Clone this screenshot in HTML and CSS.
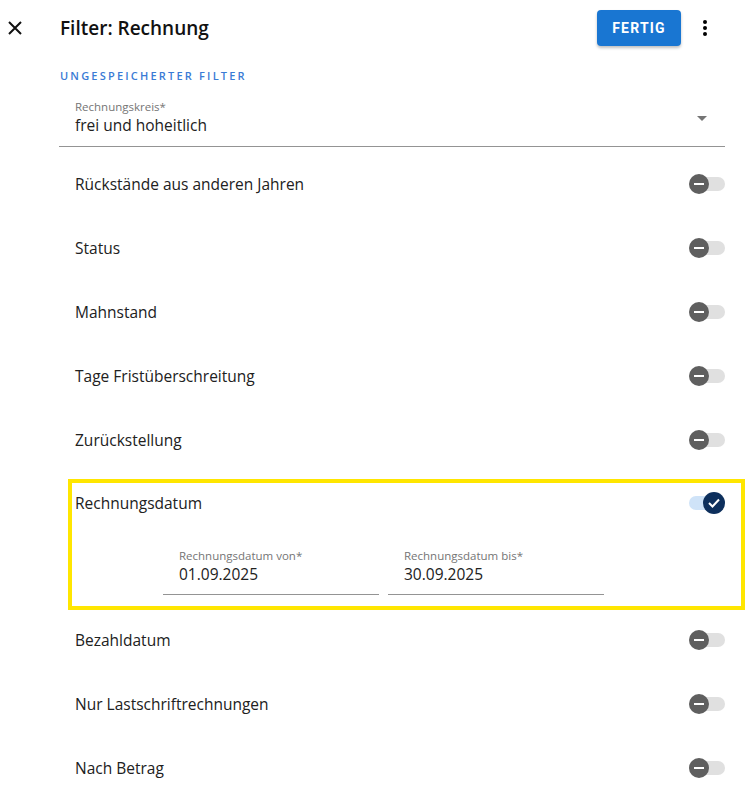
FILE: index.html
```html
<!DOCTYPE html>
<html>
    <head>
        <meta charset="utf-8">
        <title>Filter: Rechnung</title>
        <link rel="stylesheet" href="styles.css">
    </head>

    <body>
        <header class="topbar">
            <button class="icon-btn close-btn" type="button">
                <svg width="14" height="14" viewBox="0 0 14 14">
                    <path d="M1 1 L13 13 M13 1 L1 13" stroke="#111" stroke-width="2" fill="none"/>
                </svg>
            </button>
            <h1 class="title">Filter: Rechnung</h1>
            <button class="done-btn" type="button">FERTIG</button>
            <button class="icon-btn more-btn" type="button">
                <svg width="6" height="18" viewBox="0 0 6 18">
                    <circle cx="3" cy="3" r="2"/>
                    <circle cx="3" cy="9" r="2"/>
                    <circle cx="3" cy="15" r="2"/>
                </svg>
            </button>
        </header>

        <main class="content">
            <div class="section-title">UNGESPEICHERTER FILTER</div>

            <div class="select-field">
                <div class="field-text">
                    <div class="field-label">Rechnungskreis*</div>
                    <div class="field-value">frei und hoheitlich</div>
                </div>
                <svg class="caret" width="10" height="5" viewBox="0 0 10 5">
                    <path d="M0 0 L10 0 L5 5 Z" fill="#757575"/>
                </svg>
            </div>

            <div class="row first">
                <span>Rückstände aus anderen Jahren</span>
                <span class="toggle"><span class="thumb"></span></span>
            </div>
            <div class="row">
                <span>Status</span>
                <span class="toggle"><span class="thumb"></span></span>
            </div>
            <div class="row">
                <span>Mahnstand</span>
                <span class="toggle"><span class="thumb"></span></span>
            </div>
            <div class="row">
                <span>Tage Fristüberschreitung</span>
                <span class="toggle"><span class="thumb"></span></span>
            </div>
            <div class="row">
                <span>Zurückstellung</span>
                <span class="toggle"><span class="thumb"></span></span>
            </div>

            <div class="highlight">
                <div class="row">
                    <span>Rechnungsdatum</span>
                    <span class="toggle on">
                        <span class="thumb">
                            <svg width="12" height="10" viewBox="0 0 12 10">
                                <path d="M1 5 L4.5 8.5 L11 1.5" stroke="#fff" stroke-width="2" fill="none"/>
                            </svg>
                        </span>
                    </span>
                </div>
                <div class="date-fields">
                    <div class="date-field">
                        <div class="field-label">Rechnungsdatum von*</div>
                        <div class="field-value">01.09.2025</div>
                    </div>
                    <div class="date-field">
                        <div class="field-label">Rechnungsdatum bis*</div>
                        <div class="field-value">30.09.2025</div>
                    </div>
                </div>
            </div>

            <div class="row">
                <span>Bezahldatum</span>
                <span class="toggle"><span class="thumb"></span></span>
            </div>
            <div class="row">
                <span>Nur Lastschriftrechnungen</span>
                <span class="toggle"><span class="thumb"></span></span>
            </div>
            <div class="row">
                <span>Nach Betrag</span>
                <span class="toggle"><span class="thumb"></span></span>
            </div>
        </main>
    </body>
</html>
```

FILE: styles.css
```css
body
{
    margin: 0;
    background-color: #fff;
    color: #212121;
    font-family: "Open Sans", "Noto Sans", sans-serif;
    overflow: hidden;
}

.topbar
{
    display: flex;
    align-items: center;
    height: 56px;
    padding: 0 34px 0 0;
}

.icon-btn
{
    border: none;
    background: none;
    padding: 0;
    display: flex;
    align-items: center;
    justify-content: center;
}

.close-btn
{
    width: 30px;
    height: 30px;
}

.title
{
    flex: 1;
    margin: 0 0 0 30px;
    font-size: 19px;
    font-weight: 600;
    color: #111;
}

.done-btn
{
    width: 84px;
    height: 36px;
    border: none;
    border-radius: 4px;
    background-color: #1976d2;
    color: #fff;
    font-family: Roboto, sans-serif;
    font-weight: 700;
    font-size: 14px;
    letter-spacing: 1.2px;
    box-shadow: 0 2px 3px rgba(0, 0, 0, 0.25);
}

.more-btn
{
    width: 14px;
    height: 24px;
    margin-left: 17px;
}

.content
{
    padding: 0 21px 0 59px;
}

.section-title
{
    margin-top: 13px;
    padding-left: 1px;
    color: #3a7bd5;
    font-size: 11px;
    font-weight: 600;
    letter-spacing: 2.2px;
    line-height: 14px;
}

.select-field
{
    display: flex;
    align-items: center;
    margin-top: 15px;
    height: 48px;
    padding: 0 18px 0 16px;
    border-bottom: 1px solid #949494;
}

.field-text
{
    flex: 1;
    padding-bottom: 8px;
}

.field-label
{
    font-size: 11.5px;
    color: #757575;
    line-height: 14px;
}

.field-value
{
    font-size: 15.5px;
    line-height: 22px;
    color: #212121;
}

.caret
{
    margin-bottom: 8px;
}

.row
{
    display: flex;
    align-items: center;
    justify-content: space-between;
    height: 64px;
    padding-left: 16px;
    font-size: 15.5px;
}

.row.first
{
    margin-top: 5px;
}

.toggle
{
    position: relative;
    width: 36px;
    height: 14px;
    border-radius: 7px;
    background-color: #e0e0e0;
}

.toggle .thumb
{
    position: absolute;
    left: 0;
    top: -3px;
    width: 20px;
    height: 20px;
    border-radius: 50%;
    background-color: #5f5f5f;
    display: flex;
    align-items: center;
    justify-content: center;
}

.toggle .thumb::after
{
    content: "";
    width: 10px;
    height: 2px;
    background-color: #fff;
}

.toggle.on
{
    background-color: #cfe3f8;
}

.toggle.on .thumb
{
    left: auto;
    right: 0;
    top: -4px;
    width: 22px;
    height: 22px;
    background-color: #0d2f5c;
}

.toggle.on .thumb::after
{
    display: none;
}

.highlight
{
    margin: 7px -20px -2px 9px;
    border: 4px solid #ffe600;
    padding-right: 16px;
}

.highlight .row
{
    padding-left: 3px;
    height: 40px;
}

.date-fields
{
    display: flex;
    gap: 9px;
    padding: 26px 0 11px 91px;
}

.date-field
{
    width: 200px;
    padding-left: 16px;
    border-bottom: 1px solid #949494;
    padding-bottom: 9px;
}
```
